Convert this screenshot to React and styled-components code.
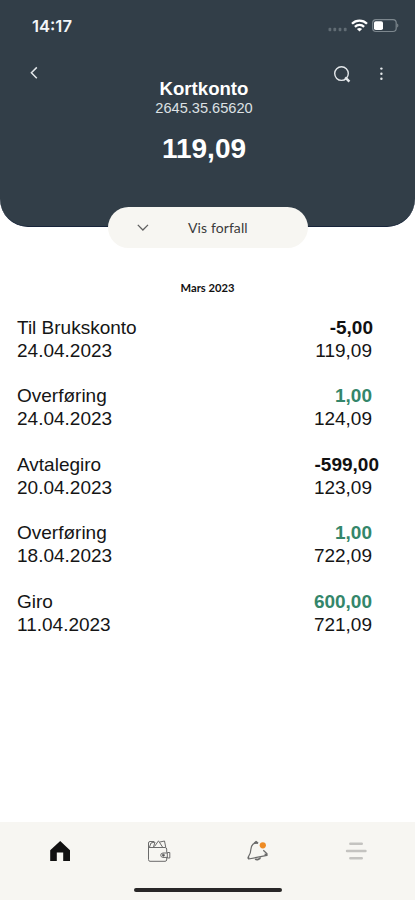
import React from 'react';
import styled, { createGlobalStyle } from 'styled-components';

const GlobalStyle = createGlobalStyle`
    * {
        box-sizing: border-box;
    }
    body {
        margin: 0;
        background: #FFFFFF;
        font-family: "Liberation Sans", Arial, sans-serif;
    }
    svg {
        display: block;
    }
`
const Screen = styled.div`
    width: 415px;
    height: 900px;
    display: flex;
    flex-direction: column;
    background: #FFFFFF;
    color: #151515;
    overflow: hidden;
`
const Header = styled.header`
    height: 227px;
    flex-shrink: 0;
    background: #323E48;
    border-bottom: 1px solid #17243A;
    border-radius: 0 0 28px 28px;
    color: #FFFFFF;
`
const StatusBar = styled.div`
    height: 52px;
    padding: 0 16px 0 32px;
    display: flex;
    align-items: center;
    justify-content: space-between;
`
const Clock = styled.div`
    font-family: Inter, sans-serif;
    font-size: 16.6px;
    font-weight: 600;
    line-height: 20px;
    color: #F3F6F8;
`
const StatusIcons = styled.div`
    display: flex;
    align-items: center;
    gap: 4px;
`
const Toolbar = styled.div`
    height: 28px;
    margin-top: 7px;
    padding: 0 24px;
    display: flex;
    align-items: center;
    justify-content: space-between;
`
const ToolbarActions = styled.div`
    display: flex;
    gap: 20px;
`
const IconButton = styled.button`
    width: 20px;
    height: 20px;
    padding: 0;
    border: 0;
    background: none;
    color: #E4E8EB;
`
const Account = styled.div`
    margin-top: -9px;
    padding-right: 7px;
    text-align: center;
`
const AccountName = styled.div`
    font-size: 18.6px;
    font-weight: 700;
    line-height: 22px;
`
const AccountNumber = styled.div`
    font-size: 14.6px;
    line-height: 16px;
    color: #DDE1E4;
`
const Balance = styled.div`
    margin-top: 17px;
    font-size: 28px;
    font-weight: 700;
    line-height: 32px;
`
const DueButton = styled.button`
    width: 200px;
    height: 41px;
    flex-shrink: 0;
    margin: -20px 0 0 108px;
    padding: 0 0 0 28px;
    border: 0;
    border-radius: 21px;
    background: #F7F6F2;
    display: flex;
    align-items: center;
    gap: 38px;
    font-family: Lato, sans-serif;
    font-size: 14px;
    letter-spacing: 0.1px;
    color: #3B3B3B;
    z-index: 1;
`
const Month = styled.h2`
    margin: 32px 0 0;
    font-family: Lato, sans-serif;
    font-size: 11.2px;
    font-weight: 700;
    line-height: 16px;
    text-align: center;
    color: #111111;
`
const TransactionList = styled.ul`
    flex: 1;
    margin: 0;
    padding: 20px 43px 0 17px;
    list-style: none;
    display: flex;
    flex-direction: column;
    gap: 22.4px;
`
const Transaction = styled.li`
    display: grid;
    grid-template-columns: 1fr auto;
    font-size: 19px;
    line-height: 23px;
`
const Amount = styled.div`
    margin-right: ${props => props.$shift || 0}px;
    font-weight: 700;
    text-align: right;
    color: ${props => props.$incoming ? '#34866A' : '#111111'};
`
const Remaining = styled.div`
    text-align: right;
`
const TabBar = styled.nav`
    height: 78px;
    flex-shrink: 0;
    background: #F7F6F2;
    display: flex;
    flex-direction: column;
    justify-content: space-between;
    align-items: center;
    padding-bottom: 8px;
`
const Tabs = styled.div`
    width: 100%;
    height: 58px;
    padding: 0 44px;
    display: flex;
    align-items: center;
    justify-content: space-between;
`
const Tab = styled.button`
    width: 30px;
    height: 30px;
    padding: 0;
    border: 0;
    background: none;
`
const HomeIndicator = styled.div`
    width: 148px;
    height: 4px;
    border-radius: 2px;
    background: #292728;
`

const transactions = [
    { name: 'Til Brukskonto', date: '24.04.2023', amount: '-5,00', balance: '119,09', shift: -1 },
    { name: 'Overføring', date: '24.04.2023', amount: '1,00', balance: '124,09', incoming: true },
    { name: 'Avtalegiro', date: '20.04.2023', amount: '-599,00', balance: '123,09', shift: -7 },
    { name: 'Overføring', date: '18.04.2023', amount: '1,00', balance: '722,09', incoming: true },
    { name: 'Giro', date: '11.04.2023', amount: '600,00', balance: '721,09', incoming: true },
]

const SignalIcon = () => (
    <svg width="19" height="14" viewBox="0 0 19 14" fill="#616C74">
        <rect x="0.5" y="8.7" width="2.8" height="3.6" rx="1" />
        <rect x="5.4" y="8.7" width="2.8" height="3.6" rx="1" />
        <rect x="10.6" y="8.7" width="2.8" height="3.6" rx="1" />
        <rect x="15.8" y="8.7" width="2.8" height="3.6" rx="1" />
    </svg>
)

const WifiIcon = () => (
    <svg width="17" height="14" viewBox="0 0 17 14" fill="none" stroke="#FFFFFF" strokeWidth="2.3">
        <path d="M1 4.7C5.2 0.5 11.8 0.5 16 4.7" />
        <path d="M3.9 7.8C6.5 5.3 10.5 5.3 13.1 7.8" />
        <path d="M5.9 10C7.4 8.6 9.6 8.6 11.1 10L8.5 12.5Z" fill="#FFFFFF" stroke="none" />
    </svg>
)

const BatteryIcon = () => (
    <svg width="27" height="14" viewBox="0 0 27 14">
        <rect x="0.7" y="0.7" width="23.5" height="11.8" rx="3.2" fill="none" stroke="#7D878E" strokeWidth="1.2" />
        <rect x="2" y="2.2" width="9" height="8.8" rx="1.8" fill="#FFFFFF" />
        <path d="M25.2 4.6V8.6C26.8 7.8 26.8 5.4 25.2 4.6Z" fill="#7D878E" />
    </svg>
)

const BackIcon = () => (
    <svg width="20" height="20" viewBox="0 0 20 20" fill="none" stroke="currentColor" strokeWidth="1.5">
        <path d="M12.8 4.4L7.4 9.8L12.8 15.2" />
    </svg>
)

const SearchIcon = () => (
    <svg width="20" height="20" viewBox="0 0 20 20" fill="none" stroke="currentColor">
        <circle cx="10.5" cy="10.6" r="6.8" strokeWidth="1.4" />
        <path d="M14.2 14.4L18.4 18.6" strokeWidth="2.5" />
    </svg>
)

const MoreIcon = () => (
    <svg width="20" height="20" viewBox="0 0 20 20" fill="currentColor">
        <circle cx="10.4" cy="5.6" r="1.2" />
        <circle cx="10.4" cy="10.7" r="1.2" />
        <circle cx="10.4" cy="15.8" r="1.2" />
    </svg>
)

const ChevronDownIcon = () => (
    <svg width="14" height="10" viewBox="0 0 14 10" fill="none" stroke="#606060" strokeWidth="1.3">
        <path d="M1.8 1.9L6.9 7L12 1.9" />
    </svg>
)

const HomeIcon = () => (
    <svg width="30" height="30" viewBox="0 0 30 30" fill="#111111">
        <path d="M16.2 5L26 14.3V25H19.2V16.5H12.8V25H6.2V14.3Z" />
    </svg>
)

const WalletIcon = () => (
    <svg width="30" height="30" viewBox="0 0 30 30" fill="none" stroke="#6B6B6B" strokeWidth="1">
        <path d="M5.5 11.5H22Q23.7 11.5 23.7 13V16.5M23.7 21.5V24Q23.5 25.3 22 25.3H7Q5.5 25.3 5.5 23.5V7Q5.5 5.5 7 5.5H11" />
        <path d="M6.5 11L8 7L12 6L10.5 11M11.5 10.5L15.5 4.8L19.5 11M17 6L21.5 5L22.7 11" />
        <path d="M24.5 17H20Q17.7 17.2 17.7 19.2T20 21.4H24.5M24.3 16.5H26.8V22H24.3Z" />
        <circle cx="20.4" cy="19.2" r="1" fill="#444444" />
    </svg>
)

const BellIcon = () => (
    <svg width="30" height="30" viewBox="0 0 30 30" fill="none" stroke="#6B6B6B" strokeWidth="1.2" strokeLinejoin="round">
        <path d="M15.6 7.3C11.8 6.3 9.2 9 8.9 13.3C8.8 17.4 7.4 19.1 6.3 20.8L6.6 23L25 19.4V17.8L21.3 14.3" />
        <path d="M12.3 7.4L14 5.8L16 7.4" strokeWidth="1.8" />
        <path d="M13.2 22.8C14.6 24.2 17.9 23.4 18.4 21.4" strokeWidth="1.7" />
        <path d="M6.3 21.2L6.6 22.8M22.6 18.4L25 18.6" strokeWidth="1.8" />
        <circle cx="20.8" cy="9.3" r="3.1" fill="#EE8B25" stroke="none" />
    </svg>
)

const MenuIcon = () => (
    <svg width="30" height="30" viewBox="0 0 30 30" fill="none" stroke="#C4C3C0" strokeWidth="2.4" strokeLinecap="round">
        <path d="M9.3 7.8H20.8M6 15H24.5M9.3 22.3H20.8" />
    </svg>
)

const App = () => {
    return (
        <>
            <GlobalStyle />
            <Screen>
                <Header>
                    <StatusBar>
                        <Clock>14:17</Clock>
                        <StatusIcons>
                            <SignalIcon />
                            <WifiIcon />
                            <BatteryIcon />
                        </StatusIcons>
                    </StatusBar>
                    <Toolbar>
                        <IconButton><BackIcon /></IconButton>
                        <ToolbarActions>
                            <IconButton><SearchIcon /></IconButton>
                            <IconButton><MoreIcon /></IconButton>
                        </ToolbarActions>
                    </Toolbar>
                    <Account>
                        <AccountName>Kortkonto</AccountName>
                        <AccountNumber>2645.35.65620</AccountNumber>
                        <Balance>119,09</Balance>
                    </Account>
                </Header>
                <DueButton>
                    <ChevronDownIcon />
                    Vis forfall
                </DueButton>
                <Month>Mars 2023</Month>
                <TransactionList>
                    {transactions.map(item => (
                        <Transaction key={item.date + item.balance}>
                            <div>{item.name}</div>
                            <Amount $incoming={item.incoming} $shift={item.shift}>{item.amount}</Amount>
                            <div>{item.date}</div>
                            <Remaining>{item.balance}</Remaining>
                        </Transaction>
                    ))}
                </TransactionList>
                <TabBar>
                    <Tabs>
                        <Tab><HomeIcon /></Tab>
                        <Tab><WalletIcon /></Tab>
                        <Tab><BellIcon /></Tab>
                        <Tab><MenuIcon /></Tab>
                    </Tabs>
                    <HomeIndicator />
                </TabBar>
            </Screen>
        </>
    )
}

export default App;
